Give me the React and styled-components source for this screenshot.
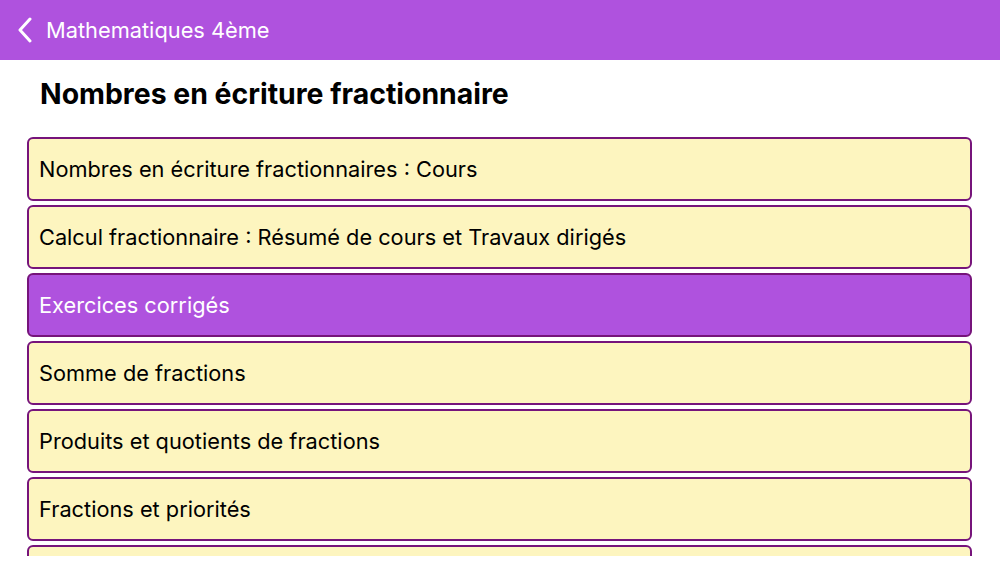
import React from "react";
import styled, { createGlobalStyle } from "styled-components";

const Global = createGlobalStyle`
  html, body { margin: 0; padding: 0; background: #ffffff; }
  body { font-family: Inter, "Liberation Sans", sans-serif; -webkit-font-smoothing: antialiased; }
`;

const Page = styled.div`
  width: 1000px;
  height: 563px;
  display: flex;
  flex-direction: column;
  background: #ffffff;
  overflow: hidden;
`;

const NavBar = styled.header`
  height: 60px;
  flex: none;
  background: #af52de;
  display: flex;
  align-items: center;
  padding-left: 17px;
  gap: 13px;
  color: #ffffff;
`;

const NavTitle = styled.span`
  font-size: 21.8px;
  font-weight: 400;
`;

const Content = styled.main`
  height: 496px;
  flex: none;
  overflow: hidden;
  padding: 0 28px 0 27px;
`;

const Heading = styled.h1`
  margin: 0;
  padding: 16px 0 0 13px;
  height: 77px;
  box-sizing: border-box;
  font-size: 28.4px;
  font-weight: 700;
  color: #000000;
`;

const List = styled.ul`
  list-style: none;
  margin: 0;
  padding: 0;
  display: flex;
  flex-direction: column;
  gap: 4px;
`;

const Row = styled.li`
  height: 64px;
  box-sizing: border-box;
  border: 2.75px solid #76147b;
  border-radius: 6px;
  background: ${(p) => (p.$active ? "#af52de" : "#fdf5bf")};
  color: ${(p) => (p.$active ? "#ffffff" : "#000000")};
  display: flex;
  align-items: center;
  padding-left: 10px;
  font-size: 21.75px;
  flex: none;
`;

const Chevron = () => (
  <svg width="16" height="26" viewBox="0 0 16 26" fill="none">
    <path d="M13 2 L3 13 L13 24" stroke="#fff" strokeWidth="3" strokeLinecap="round" strokeLinejoin="round" />
  </svg>
);

const items = [
  "Nombres en écriture fractionnaires : Cours",
  "Calcul fractionnaire : Résumé de cours et Travaux dirigés",
  "Exercices corrigés",
  "Somme de fractions",
  "Produits et quotients de fractions",
  "Fractions et priorités",
  "",
];

export default function App() {
  return (
    <Page>
      <Global />
      <NavBar>
        <Chevron />
        <NavTitle>Mathematiques 4ème</NavTitle>
      </NavBar>
      <Content>
        <Heading>Nombres en écriture fractionnaire</Heading>
        <List>
          {items.map((t, i) => (
            <Row key={i} $active={i === 2}>{t}</Row>
          ))}
        </List>
      </Content>
    </Page>
  );
}
